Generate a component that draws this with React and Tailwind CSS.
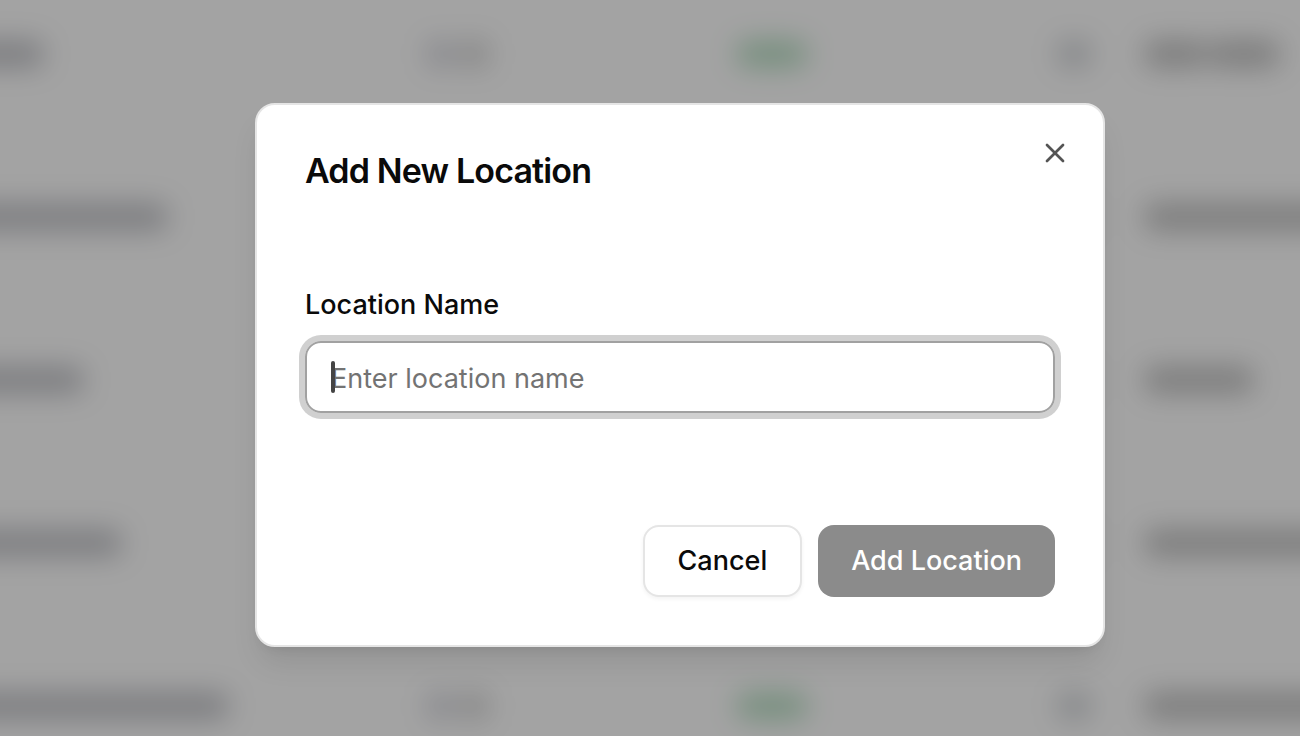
import React, { useState } from "react";
import { X } from "lucide-react";

const ROWS = [
  { name: "w-[83px]", location: ["w-[60px]", "w-[70px]"] },
  { name: "w-[207px]", location: ["w-full"] },
  { name: "w-[123px]", location: ["w-[108px]"] },
  { name: "w-[161px]", location: ["w-full"] },
  { name: "w-[268px]", location: ["w-full"] },
];

// Runs past the window on every side so the blur has no soft edge inside it
function TableBackdrop() {
  return (
    <div aria-hidden="true" className="absolute -inset-10 overflow-hidden bg-white pt-[81px] blur-[14px]">
      {ROWS.map((row, index) => (
        <div
          key={index}
          className="grid h-[163px] grid-cols-[468fr_308fr_322fr_87fr_195fr] items-start"
        >
          <div className={`h-[26px] rounded-lg bg-[#c0c1c6] ${row.name}`} />
          <div className="flex gap-2">
            <div className="h-[26px] w-6 rounded-lg bg-[#cfd0d8]" />
            <div className="h-[26px] w-7 rounded-lg bg-[#d0d0d0]" />
          </div>
          <div className="h-[26px] w-[72px] rounded-full bg-[#b6deC2]" />
          <div className="h-[26px] w-8 rounded-lg bg-[#ced1d5]" />
          <div className="flex gap-1">
            {row.location.map((width) => (
              <div key={width} className={`h-[26px] rounded-lg bg-[#c0c0c0] ${width}`} />
            ))}
          </div>
        </div>
      ))}
    </div>
  );
}

export default function App() {
  const [name, setName] = useState("");

  return (
    <div className="relative min-h-screen overflow-hidden font-['Inter',sans-serif] text-[#0a0a0a]">
      <TableBackdrop />
      <div className="absolute inset-0 bg-black/36" />

      <div className="relative flex min-h-screen items-center justify-center pt-[14px] pl-[60px]">
        <div
          role="dialog"
          aria-modal="true"
          aria-labelledby="dialog-title"
          className="relative w-full max-w-[850px] rounded-[20px] border-2 border-[#e5e5e5] bg-white p-12 shadow-[0_20px_30px_-6px_rgba(0,0,0,0.1),0_8px_12px_-8px_rgba(0,0,0,0.1)]"
        >
          <h2 id="dialog-title" className="text-[34px] leading-9 font-semibold tracking-tight">
            Add New Location
          </h2>

          <form onSubmit={(e) => e.preventDefault()}>
            <div className="mt-24 flex flex-col gap-4">
              <label htmlFor="location-name" className="text-[27px] leading-10 font-medium">
                Location Name
              </label>
              <div className="relative">
                <input
                  id="location-name"
                  type="text"
                  value={name}
                  onChange={(e) => setName(e.target.value)}
                  placeholder="Enter location name"
                  className="h-[72px] w-full rounded-2xl border-2 border-[#a1a1a1] px-6 pt-0.5 text-[27px] caret-transparent ring-6 ring-[#d0d0d0] outline-none placeholder:text-[#737373]"
                />
                {/* Text cursor */}
                <span className="absolute top-5 left-[26px] h-8 w-1 rounded-full bg-[#444444]" />
              </div>
            </div>

            <div className="mt-28 flex justify-end gap-4">
              <button
                type="button"
                className="h-[72px] rounded-2xl border-2 border-[#e5e5e5] bg-white px-[33px] text-[27px] font-medium shadow-[0_2px_4px_rgba(0,0,0,0.05)]"
              >
                Cancel
              </button>
              <button
                type="submit"
                disabled={!name}
                className="h-[72px] rounded-2xl bg-[#8b8b8b] px-[33px] text-[27px] font-medium text-white"
              >
                Add Location
              </button>
            </div>
          </form>

          <button type="button" aria-label="Close" className="absolute top-8 right-8 text-[#545454]">
            <X className="size-8" />
          </button>
        </div>
      </div>
    </div>
  );
}
